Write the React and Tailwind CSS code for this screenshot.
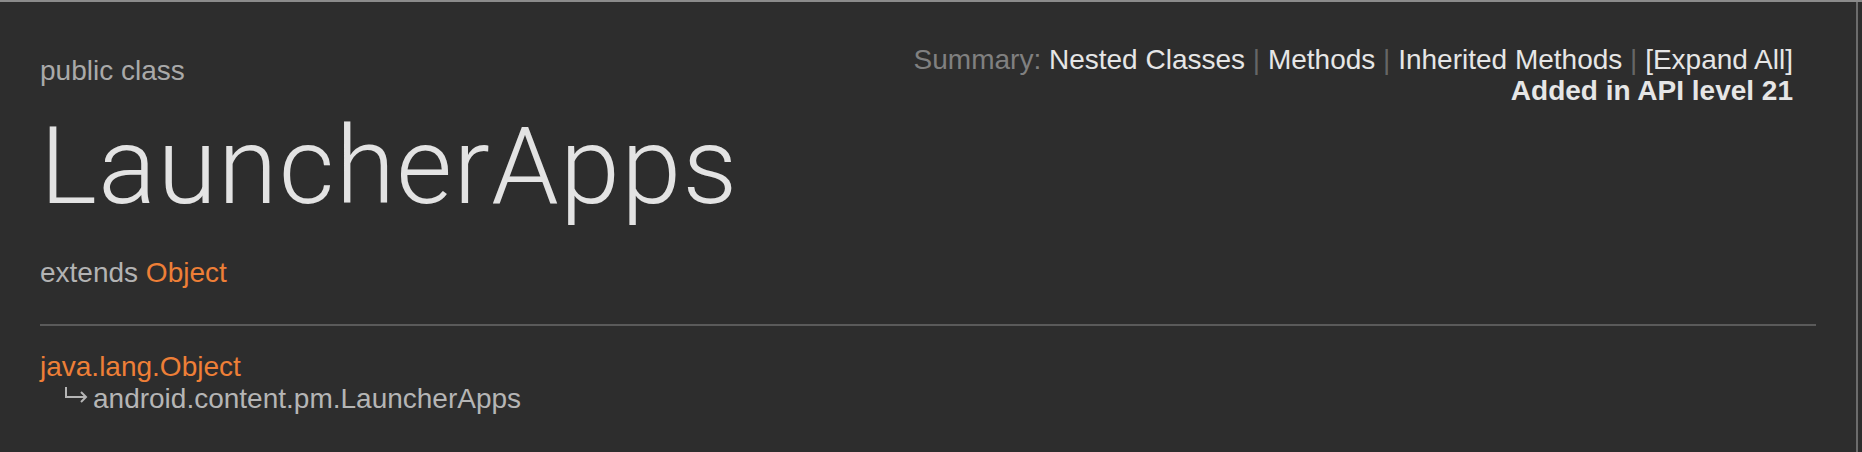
const links = ["Nested Classes", "Methods", "Inherited Methods", "[Expand All]"];

const App = () => {
    return (
        <div className="min-h-screen flex bg-[#2d2d2d] border-t-2 border-[#8b8b8b] font-['Liberation_Sans',Arial,sans-serif] text-[28px]">
            <div className="flex-1 px-[40px] pt-[42px]">
                <div className="flex justify-between items-start">
                    <div className="flex flex-col">
                        <div className="mt-[11px] leading-[32px] text-[#a9a9a9]">public class</div>
                        <h1 className="mt-[25px] text-[108px] leading-none font-light tracking-[1.3px] text-[#e3e3e3] font-['Roboto',sans-serif]">
                            LauncherApps
                        </h1>
                        <div className="mt-[37px] leading-[32px] text-[#b3b3b3]">
                            extends <a href="#" className="text-[#ee7f37]">Object</a>
                        </div>
                    </div>
                    <div className="mr-[23px] text-right leading-[31px]">
                        <div>
                            <span className="text-[#808080]">Summary: </span>
                            {links.map((l, i) => (
                                <span key={l}>
                                    {i > 0 && <span className="text-[#666666]"> | </span>}
                                    <a href="#" className="text-[#e6e6e6]">{l}</a>
                                </span>
                            ))}
                        </div>
                        <div className="font-bold text-[#e6e6e6]">Added in API level 21</div>
                    </div>
                </div>
                <div className="mt-[35px] h-[2px] bg-[#5a5a5a]"></div>
                <div className="mt-[25px] leading-[32px]">
                    <a href="#" className="text-[#ee7f37]">java.lang.Object</a>
                    <div className="pl-[24px] text-[#b5b5b5]">
                        {/* hierarchy arrow */}
                        <svg width="24" height="22" viewBox="0 0 24 22" className="inline-block align-baseline mr-[5px]" fill="none" stroke="currentColor" strokeWidth="2">
                            <path d="M2 1V11H22" />
                            <path d="M17 6L22 11L17 16" />
                        </svg>
                        android.content.pm.LauncherApps
                    </div>
                </div>
            </div>
            <div className="w-[2px] bg-[#6c6c6c]"></div>
            <div className="w-[4px]"></div>
        </div>
    );
};

export default App;
